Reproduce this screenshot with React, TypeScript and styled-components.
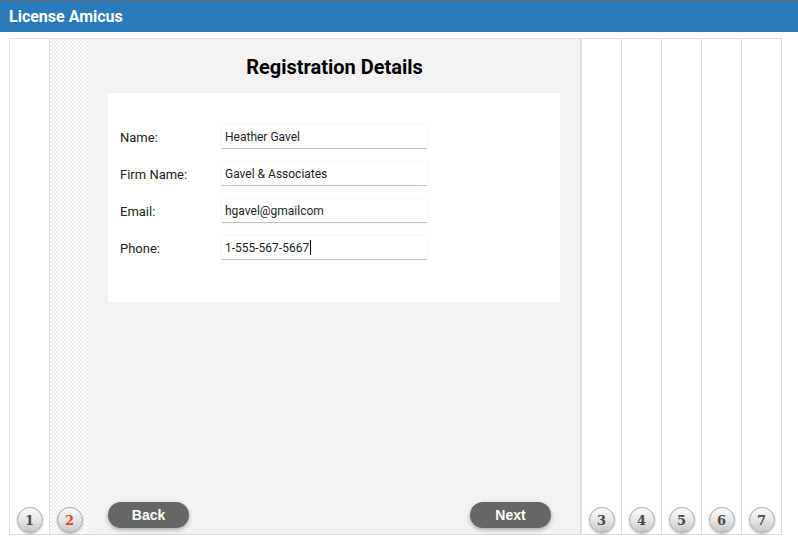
import styled, { createGlobalStyle } from "styled-components";

const GlobalStyle = createGlobalStyle`
  body {
    margin: 0;
    background: #ffffff;
    font-family: Roboto, "Liberation Sans", sans-serif;
  }
`;

const Header = styled.div`
  height: 31px;
  border-top: 1px solid #6f6f6f;
  background: #2b7bbb;
  color: #ffffff;
  font-family: Roboto, "Liberation Sans", sans-serif;
  font-weight: 700;
  font-size: 16px;
  line-height: 31px;
  padding-left: 9px;
`;

const Stage = styled.div`
  padding: 6px 16px 0 9px;
`;

const Panel = styled.div`
  display: flex;
  height: 495px;
  border: 1px solid #dddddd;
  border-right: none;
`;

const TabColumn = styled.div<{ $hatched?: boolean; $bordered?: boolean }>`
  box-sizing: border-box;
  width: ${(p) => (p.$bordered ? 40 : 39)}px;
  flex-shrink: 0;
  display: flex;
  flex-direction: column;
  justify-content: flex-end;
  align-items: center;
  padding-bottom: 1px;
  border-right: ${(p) => (p.$bordered ? "1px solid #dddddd" : "none")};
  background: ${(p) =>
    p.$hatched
      ? "repeating-conic-gradient(#f0f0f0 0 25%, #fcfcfc 0 50%) 0 0 / 4px 4px"
      : "#ffffff"};
`;

const StepCircle = styled.div<{ $active?: boolean }>`
  box-sizing: border-box;
  width: 26px;
  height: 26px;
  border-radius: 50%;
  border: 1px solid #a9a9a9;
  background: linear-gradient(#fafafa 0%, #e6e6e6 50%, #c6c6c6 100%);
  box-shadow: 0 1px 2px rgba(0, 0, 0, 0.25);
  display: flex;
  align-items: center;
  justify-content: center;
  font-family: "DejaVu Serif", "Liberation Serif", serif;
  font-weight: 700;
  font-size: 13px;
  color: ${(p) => (p.$active ? "#e8461e" : "#4a4a4a")};
`;

const Main = styled.div`
  box-sizing: border-box;
  width: 493px;
  flex-shrink: 0;
  background: #f2f2f2;
  border-right: 2px solid #dddddd;
  display: flex;
  flex-direction: column;
`;

const Title = styled.h1`
  margin: 14px 0 0;
  text-align: center;
  font-family: Roboto, "Liberation Sans", sans-serif;
  font-size: 20px;
  font-weight: 700;
  line-height: 28px;
  color: #000000;
`;

const Card = styled.div`
  margin: 12px 20px 0 19px;
  height: 209px;
  box-sizing: border-box;
  background: #ffffff;
  padding: 32px 12px 0;
  display: flex;
  flex-direction: column;
  gap: 13px;
`;

const Row = styled.div`
  display: flex;
  align-items: center;
  height: 24px;
`;

const Label = styled.div`
  width: 102px;
  font-size: 13px;
  color: #222222;
`;

const Field = styled.div`
  box-sizing: border-box;
  width: 205px;
  height: 24px;
  padding-left: 3px;
  display: flex;
  align-items: center;
  background: #ffffff;
  border-bottom: 1px solid #c2c2c2;
  box-shadow: 0 0 4px rgba(0, 0, 0, 0.06);
  font-size: 12px;
  color: #1e1e1e;
`;

const Caret = styled.span`
  display: inline-block;
  width: 1px;
  height: 15px;
  margin-left: 1px;
  background: #000000;
`;

const ButtonRow = styled.div`
  margin-top: auto;
  display: flex;
  justify-content: space-between;
  padding: 0 29px 6px 19px;
`;

const NavButton = styled.button`
  width: 81px;
  height: 26px;
  border: none;
  border-radius: 13px;
  background: #666666;
  box-shadow: 0 2px 4px rgba(0, 0, 0, 0.3);
  color: #ffffff;
  font-family: "Liberation Sans", Arial, sans-serif;
  font-weight: 700;
  font-size: 14px;
  padding: 0;
  cursor: pointer;
`;

const fields = [
  { label: "Name:", value: "Heather Gavel" },
  { label: "Firm Name:", value: "Gavel & Associates" },
  { label: "Email:", value: "hgavel@gmailcom" },
  { label: "Phone:", value: "1-555-567-5667", focused: true },
];

export default function App() {
  return (
    <>
      <GlobalStyle />
      <Header>License Amicus</Header>
      <Stage>
        <Panel>
          <TabColumn $bordered>
            <StepCircle>1</StepCircle>
          </TabColumn>
          <TabColumn $hatched>
            <StepCircle $active>2</StepCircle>
          </TabColumn>
          <Main>
            <Title>Registration Details</Title>
            <Card>
              {fields.map((f) => (
                <Row key={f.label}>
                  <Label>{f.label}</Label>
                  <Field>
                    {f.value}
                    {f.focused && <Caret />}
                  </Field>
                </Row>
              ))}
            </Card>
            <ButtonRow>
              <NavButton>Back</NavButton>
              <NavButton>Next</NavButton>
            </ButtonRow>
          </Main>
          {[3, 4, 5, 6, 7].map((n) => (
            <TabColumn key={n} $bordered>
              <StepCircle>{n}</StepCircle>
            </TabColumn>
          ))}
        </Panel>
      </Stage>
    </>
  );
}
